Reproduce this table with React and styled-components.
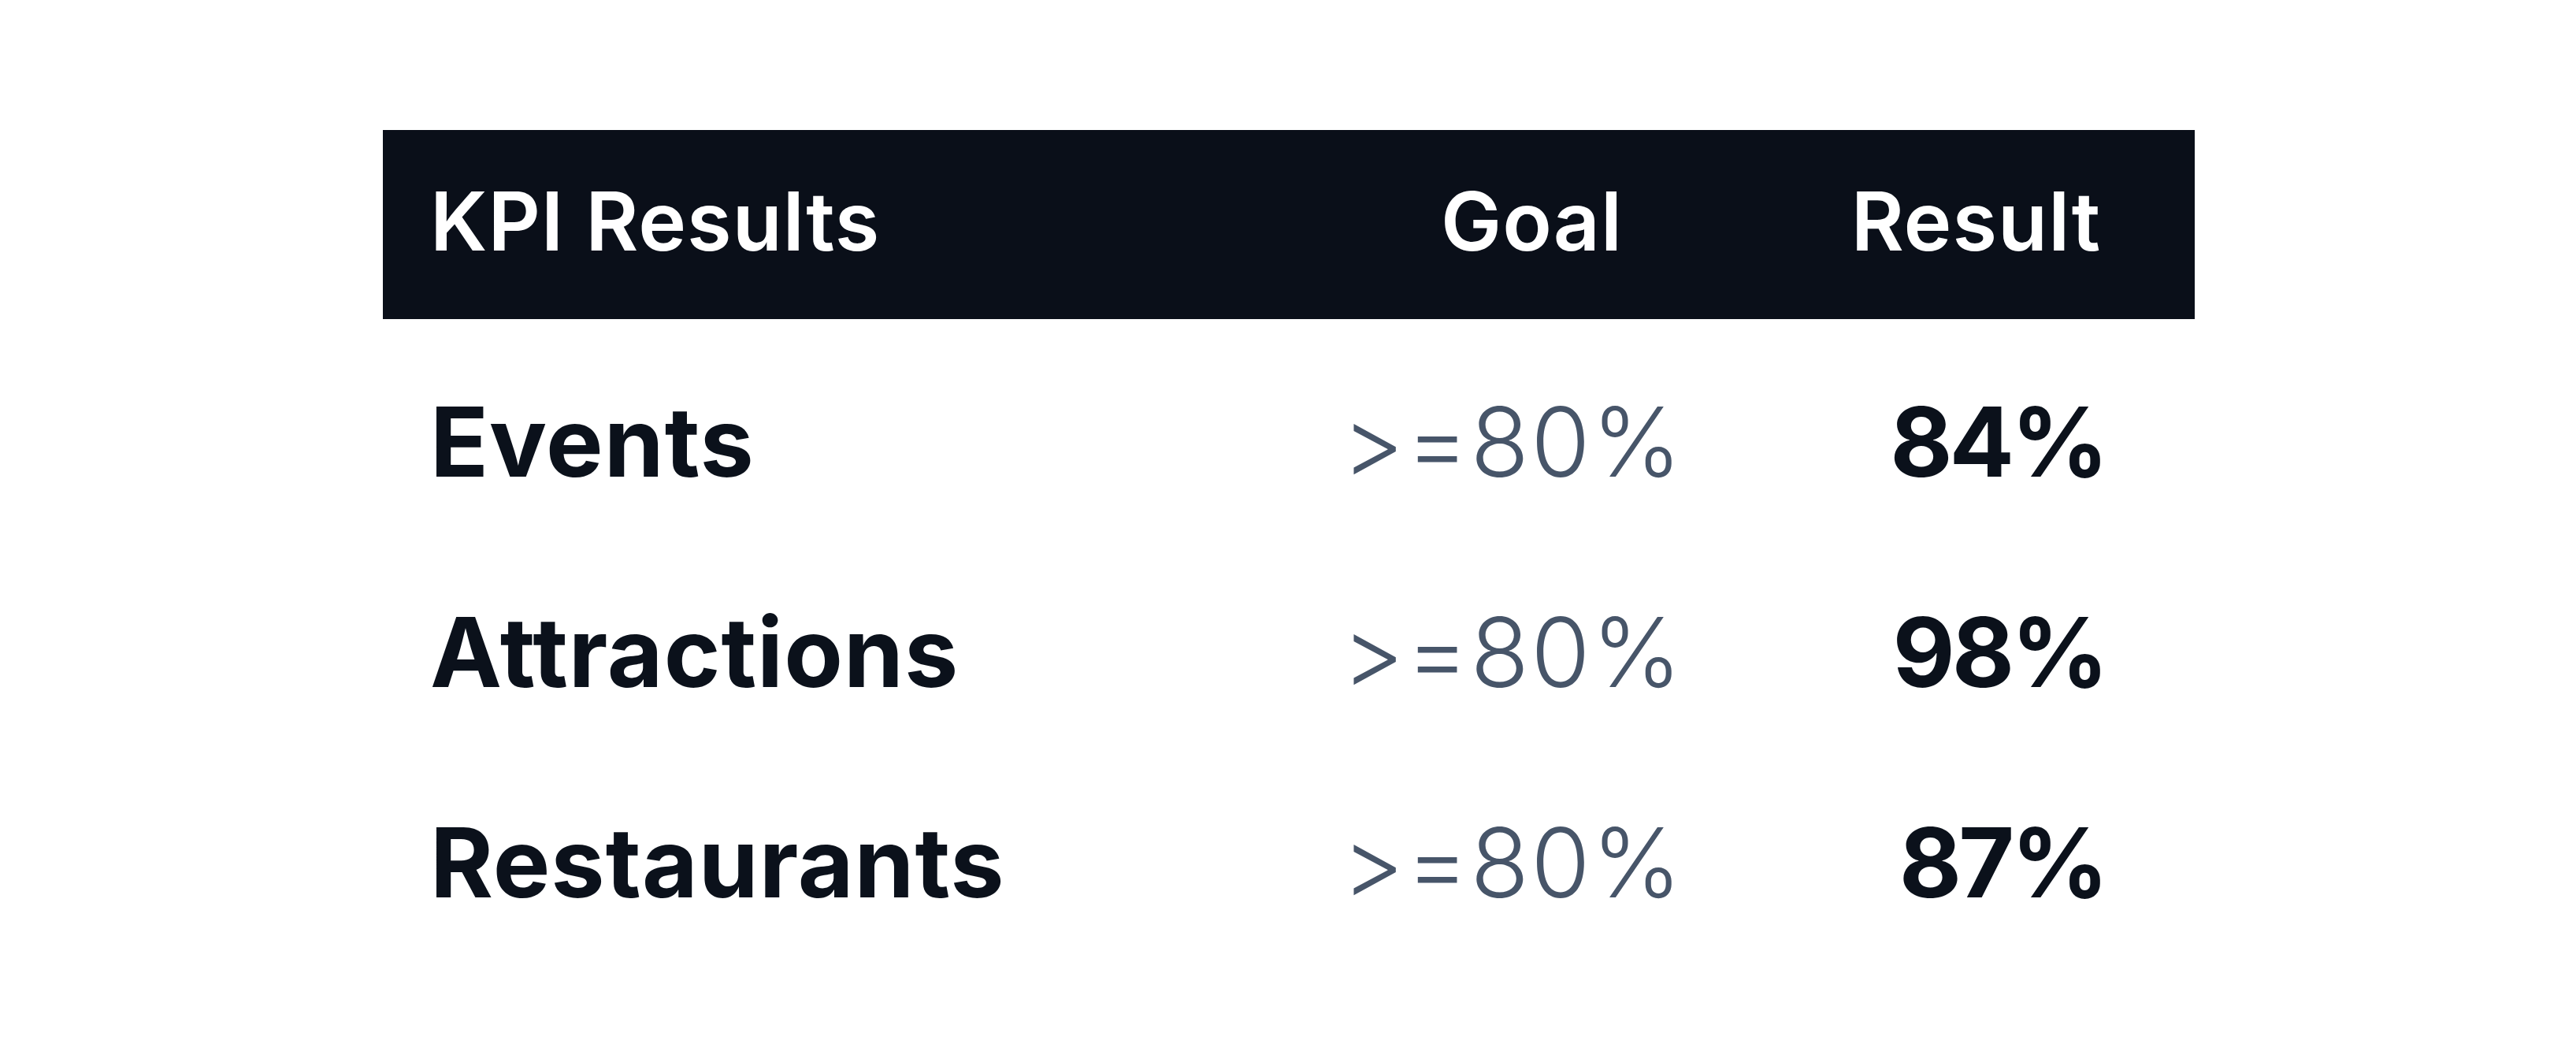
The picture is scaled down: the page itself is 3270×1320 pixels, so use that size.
import styled, { createGlobalStyle } from "styled-components";

const GlobalStyle = createGlobalStyle`
  body {
    margin: 0;
    background: #ffffff;
    font-family: Inter, "Liberation Sans", sans-serif;
  }
`;

const Page = styled.div`
  width: 3270px;
  height: 1320px;
  padding: 165px 0 0 486px;
  box-sizing: border-box;
`;

const Table = styled.div`
  width: 2300px;
`;

const HeaderRow = styled.div`
  display: grid;
  grid-template-columns: 1fr 411px 542px;
  align-items: center;
  height: 240px;
  padding: 0 119px 10px 60px;
  box-sizing: border-box;
  background: #0a0f19;
  color: #ffffff;
  font-size: 103px;
  font-weight: 600;
  letter-spacing: 1px;
`;

const HeadCell = styled.div`
  text-align: ${(p) => p.$align || "left"};
  padding-left: ${(p) => p.$shift || 0}px;
`;

const Body = styled.div`
  padding-top: 22px;
`;

const Row = styled.div`
  display: grid;
  grid-template-columns: 1fr 560px 433px;
  align-items: center;
  height: 267px;
  padding: 0 113px 0 60px;
  box-sizing: border-box;
  font-size: 122px;
`;

const Label = styled.div`
  font-weight: 700;
  color: #0b111b;
  letter-spacing: 1px;
`;

const Goal = styled.div`
  font-weight: 300;
  color: #475569;
  text-align: center;
  letter-spacing: 2px;
  padding-right: 80px;
  white-space: nowrap;
`;

const Result = styled.div`
  font-weight: 700;
  color: #0b111b;
  text-align: right;
  letter-spacing: -4px;
`;

const rows = [
  { name: "Events", goal: ">=80%", result: "84%" },
  { name: "Attractions", goal: ">=80%", result: "98%" },
  { name: "Restaurants", goal: ">=80%", result: "87%" },
];

export default function App() {
  return (
    <Page>
      <GlobalStyle />
      <Table>
        <HeaderRow>
          <HeadCell>KPI Results</HeadCell>
          <HeadCell $align="center" $shift={50}>Goal</HeadCell>
          <HeadCell $align="right">Result</HeadCell>
        </HeaderRow>
        <Body>
          {rows.map((r) => (
            <Row key={r.name}>
              <Label>{r.name}</Label>
              <Goal>{r.goal}</Goal>
              <Result>{r.result}</Result>
            </Row>
          ))}
        </Body>
      </Table>
    </Page>
  );
}
